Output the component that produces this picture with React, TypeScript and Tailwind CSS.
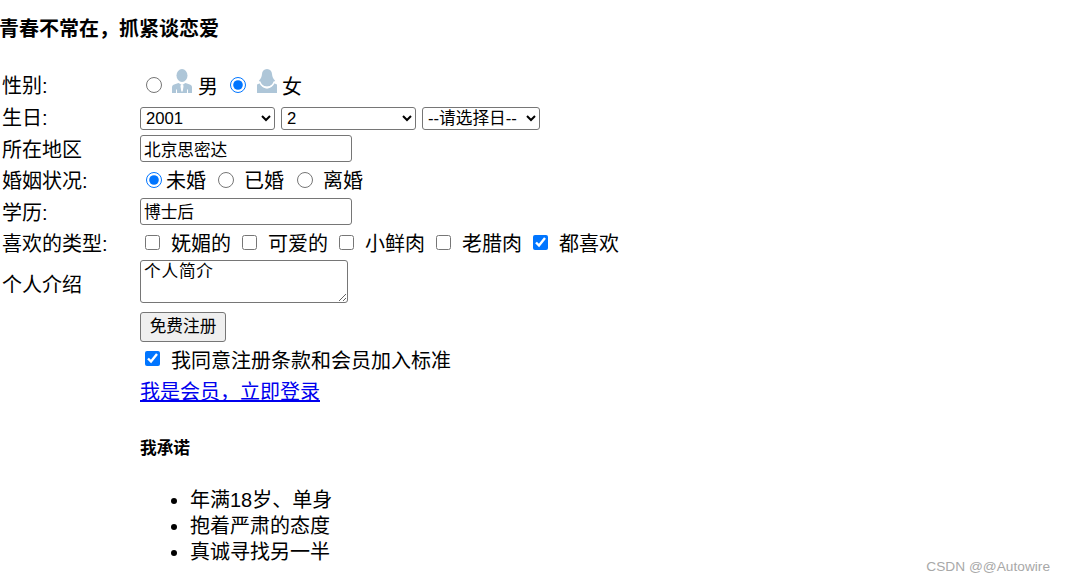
const font = "font-['Liberation_Sans','Noto_Sans_CJK_SC',sans-serif]";

function ManIcon() {
  return (
    <svg width="20" height="24" viewBox="0 0 20 24" className="block">
      <ellipse cx="10" cy="6.500" rx="5.500" ry="6.500" fill="#aec6d8" />
      <path d="M0 24v-6c0-1.800 2-2.800 6.500-4L10 16l3.500-2c4.500 1.200 6.500 2.200 6.500 4v6z" fill="#aec6d8" />
      <path d="M8.800 15.500h2.400l.3 2-.8 5H9.300l-.8-5z M4 20.500v3.500h1v-3.500z M15 20.500v3.500h1v-3.500z" fill="#fff" />
    </svg>
  );
}

function WomanIcon() {
  return (
    <svg width="20" height="24" viewBox="0 0 20 24" className="block">
      <path d="M10 0c3.200 0 4.800 2.200 5 5 .2 2.800 1.300 4.800 3 6.500-1 2.500-4 6-8 6s-7-3.500-8-6c1.700-1.700 2.800-3.700 3-6.500.2-2.800 1.800-5 5-5z" fill="#aec6d8" />
      <path d="M0 24v-8.500l3.500-1.500c1 3 3.700 5.500 6.500 5.500s5.500-2.500 6.500-5.500l3.500 1.500V24z" fill="#aec6d8" />
      <path d="M2.500 12.500c1.500 3.800 4 6 7.500 6s6-2.200 7.500-6" fill="none" stroke="#fff" strokeWidth="1.500" />
    </svg>
  );
}

const fieldBox = "border border-[#767676] rounded-[3px] bg-white text-black";
const selectBox = `${fieldBox} h-[23px] text-[16.67px] pl-[1px]`;
const inputBox = `${fieldBox} block h-[27px] w-[212px] -mt-[2px] px-[3px] text-[16.67px] outline-none`;
const radioBox = "block size-4 m-0 -mt-[2px]";
const checkBox = "block size-[15px] m-0 -mt-[3px]";

const tastes = [
  { label: "妩媚的", checked: false },
  { label: "可爱的", checked: false },
  { label: "小鲜肉", checked: false },
  { label: "老腊肉", checked: false },
  { label: "都喜欢", checked: true },
];

function Row({ label, height, labelClass = "", children }: { label?: string; height: string; labelClass?: string; children: React.ReactNode }) {
  return (
    <div className={`grid grid-cols-[140px_1fr] items-center ${height}`}>
      <div className={`pl-[2px] ${labelClass}`}>{label}</div>
      <div className="flex items-center">{children}</div>
    </div>
  );
}

export default function App() {
  return (
    <div className={`relative h-[582px] w-[1065px] overflow-hidden bg-white text-[20px] leading-[26px] text-black ${font}`}>
      <h4 className="-ml-px h-[69px] pt-4 font-bold">青春不常在，抓紧谈恋爱</h4>

      <form>
        <Row label="性别:" height="h-[33px]">
          <input type="radio" name="sex" className={`${radioBox} ml-[6px]`} />
          <span className="ml-[10px] -mt-[9px]"><ManIcon /></span>
          <span className="ml-[6px] mt-[2px]">男</span>
          <input type="radio" name="sex" defaultChecked className={`${radioBox} ml-[12px]`} />
          <span className="ml-[11px] -mt-[9px]"><WomanIcon /></span>
          <span className="ml-[5px] mt-[2px]">女</span>
        </Row>
        <Row label="生日:" height="h-[32px]">
          <select defaultValue="2001" className={`${selectBox} w-[135px]`}>
            <option>2001</option>
          </select>
          <select defaultValue="2" className={`${selectBox} ml-[6px] w-[135px]`}>
            <option>2</option>
          </select>
          <select className={`${selectBox} ml-[6px] w-[118px]`}>
            <option>--请选择日--</option>
          </select>
        </Row>
        <Row label="所在地区" height="h-[31px]">
          <input type="text" defaultValue="北京思密达" className={inputBox} />
        </Row>
        <Row label="婚姻状况:" height="h-[31px]">
          <input type="radio" name="marry" defaultChecked className={`${radioBox} ml-[6px]`} />
          <span className="ml-1">未婚</span>
          <input type="radio" name="marry" className={`${radioBox} ml-[12px]`} />
          <span className="ml-[10px]">已婚</span>
          <input type="radio" name="marry" className={`${radioBox} ml-[13px]`} />
          <span className="ml-[10px]">离婚</span>
        </Row>
        <Row label="学历:" height="h-[32px]" labelClass="mt-[2px]">
          <input type="text" defaultValue="博士后" className={inputBox} />
        </Row>
        <Row label="喜欢的类型:" height="h-[31px]">
          {tastes.map((t, i) => (
            <label key={t.label} className={`flex items-center ${i === 0 ? "ml-[5px]" : "ml-[11px]"}`}>
              <input type="checkbox" defaultChecked={t.checked} className={checkBox} />
              <span className="ml-[11px]">{t.label}</span>
            </label>
          ))}
        </Row>
        <Row label="个人介绍" height="h-[46px]" labelClass="mt-[6px]">
          <textarea
            defaultValue="个人简介"
            className={`${fieldBox} -mt-[2px] block h-[43px] w-[208px] px-[3px] pt-[1px] pb-0 text-[16.67px] leading-[20px] tracking-[0.8px] outline-none`}
          />
        </Row>
        <Row height="h-[39px]">
          <button type="button" className="mt-[4px] h-[30px] w-[86px] rounded-[3px] border border-[#767676] bg-[#efefef] pt-[1px] text-[16.67px]">
            免费注册
          </button>
        </Row>
        <Row height="h-[32px]">
          <input type="checkbox" defaultChecked className={`${checkBox} ml-[5px]`} />
          <span className="ml-[11px] mt-[2px]">我同意注册条款和会员加入标准</span>
        </Row>
        <Row height="h-[31px]">
          <a href="#" className="text-[#0000ee] underline">我是会员，立即登录</a>
        </Row>
      </form>

      <div className="pl-[140px]">
        <h5 className="mt-[31px] text-[16.67px] leading-[22px] font-bold">我承诺</h5>
        <ul className="mt-[27px] list-disc pl-[50px]">
          <li>年满18岁、单身</li>
          <li>抱着严肃的态度</li>
          <li>真诚寻找另一半</li>
        </ul>
      </div>

      <span className="absolute right-[15px] top-[558px] text-[13.7px] leading-[18px] text-[#a8a8a8]">CSDN @@Autowire</span>
    </div>
  );
}
